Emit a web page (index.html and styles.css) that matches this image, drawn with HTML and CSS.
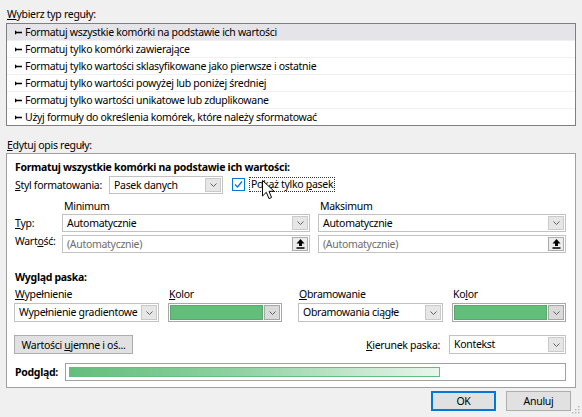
FILE: index.html
```html
<!DOCTYPE html>
<html lang="pl">
<head>
<meta charset="utf-8">
<title>Nowa reguła formatowania</title>
<link rel="stylesheet" href="styles.css">
</head>
<body>
<div class="dialog">
  <div class="group-label"><u>W</u>ybierz typ reguły:</div>
  <ul class="rule-list">
    <li class="selected"><svg class="bullet" viewBox="0 0 7 5" width="7" height="5"><path d="M0 0.2L2.6 2.5L0 4.8Z M1.5 1.8H7V3.2H1.5Z"/></svg>Formatuj wszystkie komórki na podstawie ich wartości</li>
    <li><svg class="bullet" viewBox="0 0 7 5" width="7" height="5"><path d="M0 0.2L2.6 2.5L0 4.8Z M1.5 1.8H7V3.2H1.5Z"/></svg>Formatuj tylko komórki zawierające</li>
    <li><svg class="bullet" viewBox="0 0 7 5" width="7" height="5"><path d="M0 0.2L2.6 2.5L0 4.8Z M1.5 1.8H7V3.2H1.5Z"/></svg>Formatuj tylko wartości sklasyfikowane jako pierwsze i ostatnie</li>
    <li><svg class="bullet" viewBox="0 0 7 5" width="7" height="5"><path d="M0 0.2L2.6 2.5L0 4.8Z M1.5 1.8H7V3.2H1.5Z"/></svg>Formatuj tylko wartości powyżej lub poniżej średniej</li>
    <li><svg class="bullet" viewBox="0 0 7 5" width="7" height="5"><path d="M0 0.2L2.6 2.5L0 4.8Z M1.5 1.8H7V3.2H1.5Z"/></svg>Formatuj tylko wartości unikatowe lub zduplikowane</li>
    <li><svg class="bullet" viewBox="0 0 7 5" width="7" height="5"><path d="M0 0.2L2.6 2.5L0 4.8Z M1.5 1.8H7V3.2H1.5Z"/></svg>Użyj formuły do określenia komórek, które należy sformatować</li>
  </ul>

  <div class="group-label edit-label"><u>E</u>dytuj opis reguły:</div>
  <div class="edit-box">
    <div class="title">Formatuj wszystkie komórki na podstawie ich wartości:</div>

    <div class="style-row">
      <span class="style-label"><u>S</u>tyl formatowania:</span>
      <div class="combo combo-style">
        <span class="combo-text">Pasek danych</span>
        <span class="combo-btn"><svg viewBox="0 0 7 4" width="7" height="4"><polyline points="0.5,0.5 3.5,3.5 6.5,0.5"/></svg></span>
      </div>
      <span class="checkbox"><svg viewBox="0 0 11 11" width="11" height="11"><polyline points="2,5.5 4.5,8 9,2.5"/></svg></span>
      <span class="check-label">Pokaż tylko <u>p</u>asek</span>
    </div>

    <div class="minmax">
      <span></span>
      <span class="col-head">Minimum</span>
      <span class="col-head">Maksimum</span>

      <span class="row-label"><u>T</u>yp:</span>
      <div class="combo">
        <span class="combo-text">Automatycznie</span>
        <span class="combo-btn"><svg viewBox="0 0 7 4" width="7" height="4"><polyline points="0.5,0.5 3.5,3.5 6.5,0.5"/></svg></span>
      </div>
      <div class="combo">
        <span class="combo-text">Automatycznie</span>
        <span class="combo-btn"><svg viewBox="0 0 7 4" width="7" height="4"><polyline points="0.5,0.5 3.5,3.5 6.5,0.5"/></svg></span>
      </div>

      <span class="row-label">Wart<u>o</u>ść:</span>
      <div class="field">
        <span class="field-text">(Automatycznie)</span>
        <span class="ref-btn"><svg viewBox="0 0 9 10" width="9" height="10"><path d="M4.5 0L8.5 4.5H6V7H3V4.5H0.5Z M0.5 8.3H8.5V9.8H0.5Z"/></svg></span>
      </div>
      <div class="field">
        <span class="field-text">(Automatycznie)</span>
        <span class="ref-btn"><svg viewBox="0 0 9 10" width="9" height="10"><path d="M4.5 0L8.5 4.5H6V7H3V4.5H0.5Z M0.5 8.3H8.5V9.8H0.5Z"/></svg></span>
      </div>
    </div>

    <div class="bar-title">Wygląd paska:</div>
    <div class="bar-grid">
      <div class="pair">
        <div class="cell cell-wide">
          <span class="sub-label"><u>W</u>ypełnienie</span>
          <div class="combo combo-tall">
            <span class="combo-text">Wypełnienie gradientowe</span>
            <span class="combo-btn"><svg viewBox="0 0 7 4" width="7" height="4"><polyline points="0.5,0.5 3.5,3.5 6.5,0.5"/></svg></span>
          </div>
        </div>
        <div class="cell cell-narrow">
          <span class="sub-label"><u>K</u>olor</span>
          <div class="combo combo-tall combo-color">
            <span class="swatch"></span>
            <span class="combo-btn"><svg viewBox="0 0 7 4" width="7" height="4"><polyline points="0.5,0.5 3.5,3.5 6.5,0.5"/></svg></span>
          </div>
        </div>
      </div>
      <div class="pair">
        <div class="cell cell-wide">
          <span class="sub-label"><u>O</u>bramowanie</span>
          <div class="combo combo-tall">
            <span class="combo-text">Obramowania ciągłe</span>
            <span class="combo-btn"><svg viewBox="0 0 7 4" width="7" height="4"><polyline points="0.5,0.5 3.5,3.5 6.5,0.5"/></svg></span>
          </div>
        </div>
        <div class="cell cell-narrow">
          <span class="sub-label">Ko<u>l</u>or</span>
          <div class="combo combo-tall combo-color">
            <span class="swatch"></span>
            <span class="combo-btn"><svg viewBox="0 0 7 4" width="7" height="4"><polyline points="0.5,0.5 3.5,3.5 6.5,0.5"/></svg></span>
          </div>
        </div>
      </div>
    </div>

    <div class="axis-row">
      <button class="btn btn-axis">Wartości <u>u</u>jemne i oś...</button>
      <span class="dir-label"><u>K</u>ierunek paska:</span>
      <div class="combo combo-tall combo-dir">
        <span class="combo-text">Kontekst</span>
        <span class="combo-btn"><svg viewBox="0 0 7 4" width="7" height="4"><polyline points="0.5,0.5 3.5,3.5 6.5,0.5"/></svg></span>
      </div>
    </div>

    <div class="preview-row">
      <span class="preview-label">Podgląd:</span>
      <div class="preview"><div class="preview-bar"></div></div>
    </div>
  </div>

  <div class="footer">
    <button class="btn btn-primary">OK</button>
    <button class="btn">Anuluj</button>
  </div>

  <svg class="cursor" viewBox="0 0 13 20" width="13" height="20"><path d="M0.5 0.5V16L4.3 12.3L7 18.6L9.6 17.5L7 11.3H12.2Z"/></svg>
  <svg class="grip" viewBox="0 0 8 8" width="8" height="8"><rect x="6" y="0" width="1.4" height="1.4"/><rect x="3" y="3" width="1.4" height="1.4"/><rect x="6" y="3" width="1.4" height="1.4"/><rect x="0" y="6" width="1.4" height="1.4"/><rect x="3" y="6" width="1.4" height="1.4"/><rect x="6" y="6" width="1.4" height="1.4"/></svg>
</div>
</body>
</html>
```

FILE: styles.css
```css
* { box-sizing: border-box; }
html, body { margin: 0; padding: 0; }
body {
  background: #f0f0f0;
  font-family: "Noto Sans", "Open Sans", sans-serif;
  font-size: 10.5px;
  letter-spacing: -0.3px;
  color: #000;
  width: 582px;
  height: 417px;
  overflow: hidden;
}
u { text-decoration: underline; text-underline-offset: 1px; }

.dialog {
  position: relative;
  height: 417px;
  padding: 7px 6px 0 6px;
}

.group-label { line-height: 15px; padding-left: 1px; white-space: nowrap; }
.edit-label { margin-top: 12px; }

.rule-list {
  list-style: none;
  margin: 1px 0 0;
  padding: 0;
  width: 570px;
  background: #fff;
  border: 1px solid #7f7f7f;
}
.rule-list li {
  height: 17px;
  line-height: 16px;
  border-bottom: 1px solid #f0f0f0;
  padding-left: 8px;
  display: flex;
  align-items: center;
  white-space: nowrap;
}
.rule-list li:last-child { height: 16px; border-bottom: none; }
.rule-list li.selected { background: #e4e4e9; }
.bullet { fill: #000; margin-right: 3px; flex: none; }

.edit-box {
  width: 570px;
  background: #fff;
  border: 1px solid #a0a0a0;
  padding: 6px 9px 6px 8px;
}
.title { font-weight: bold; line-height: 15px; white-space: nowrap; }

.style-row {
  display: flex;
  align-items: center;
  height: 19px;
}
.style-label { width: 94px; flex: none; white-space: nowrap; }
.combo-style { width: 114px; height: 19px; flex: none; }
.checkbox {
  width: 13px;
  height: 13px;
  margin-left: 9px;
  border: 1px solid #0078d7;
  background: #fff;
  display: flex;
  align-items: center;
  justify-content: center;
  flex: none;
}
.checkbox polyline { fill: none; stroke: #0078d7; stroke-width: 1.3; }
.check-label {
  margin-left: 4px;
  padding: 0 1px;
  line-height: 13px;
  border: 1px dotted #333;
  white-space: nowrap;
}

.combo {
  display: flex;
  align-items: stretch;
  background: #fff;
  border: 1px solid #c2c2c2;
  height: 18px;
  padding: 1px;
}
.combo-tall { height: 19px; }
.combo-text {
  flex: 1;
  padding-left: 3px;
  line-height: 14px;
  white-space: nowrap;
  overflow: hidden;
}
.combo-btn {
  width: 16px;
  flex: none;
  background: #e6e6e6;
  border: 1px solid #cacaca;
  display: flex;
  align-items: center;
  justify-content: center;
}
.combo-btn polyline { fill: none; stroke: #606060; stroke-width: 1; }

.combo-color { border-color: #a8a8a8; }
.combo-color .swatch {
  flex: 1;
  margin-right: 1px;
  background: #63be7b;
  border: 1px solid #5aa870;
}
.combo-color .combo-btn { background: #dadada; border-color: #a6a6a6; }

.minmax {
  display: grid;
  grid-template-columns: 39px 1fr 1fr;
  column-gap: 8px;
  grid-template-rows: 15px 18px 18px;
  row-gap: 0;
  margin-top: 5px;
}
.minmax .field { margin-top: 3px; }
.col-head { line-height: 15px; padding-left: 2px; }
.row-label { display: flex; align-items: center; white-space: nowrap; }

.field {
  display: flex;
  align-items: stretch;
  background: #fff;
  border: 1px solid #c2c2c2;
  height: 18px;
  padding: 1px;
}
.field-text {
  flex: 1;
  padding-left: 3px;
  line-height: 14px;
  color: #6d6d6d;
  white-space: nowrap;
}
.ref-btn {
  width: 16px;
  flex: none;
  background: #ececec;
  border: 1px solid #adadad;
  display: flex;
  align-items: center;
  justify-content: center;
}
.ref-btn path { fill: #000; }

.bar-title { font-weight: bold; line-height: 15px; margin-top: 20px; }

.bar-grid {
  display: flex;
  gap: 16px;
  margin-top: 2px;
  margin-left: -1px;
}
.pair { display: flex; gap: 9px; }
.cell { display: flex; flex-direction: column; }
.cell-wide { width: 145px; }
.cell-narrow { width: 114px; }
.sub-label { line-height: 15px; padding-left: 1px; margin-bottom: 1px; white-space: nowrap; }

.axis-row {
  display: flex;
  align-items: center;
  margin-top: 13px;
  margin-left: -1px;
}
.btn {
  font: inherit;
  letter-spacing: inherit;
  color: #000;
  background: #e1e1e1;
  border: 1px solid #adadad;
  padding: 0;
  height: 20px;
  line-height: 16px;
  border-radius: 0;
}
.btn-axis { width: 119px; height: 19px; }
.dir-label { margin-left: auto; margin-right: 9px; white-space: nowrap; }
.combo-dir { width: 117px; }

.preview-row {
  display: flex;
  align-items: center;
  margin-top: 9px;
}
.preview-label { width: 50px; flex: none; font-weight: bold; }
.preview {
  flex: 1;
  height: 18px;
  background: #fff;
  border: 1px solid #a0a0a0;
  padding: 3px;
}
.preview-bar {
  width: 371px;
  height: 10px;
  border: 1px solid #63be7b;
  background: linear-gradient(90deg, #63be7b 0%, #8fd1a2 45%, #e9f6ed 100%);
}

.footer {
  display: flex;
  justify-content: flex-end;
  gap: 10px;
  margin-top: 3px;
  padding-right: 5px;
}
.footer .btn { width: 65px; }
.btn-primary { border: 1px solid #0078d7; box-shadow: inset 0 0 0 1px #0078d7; }

.cursor {
  position: absolute;
  left: 262px;
  top: 180px;
}
.cursor path { fill: #fff; stroke: #000; stroke-width: 1; stroke-linejoin: miter; }

.grip {
  position: absolute;
  right: 2px;
  bottom: 3px;
}
.grip rect { fill: #b4b4b4; }
```
